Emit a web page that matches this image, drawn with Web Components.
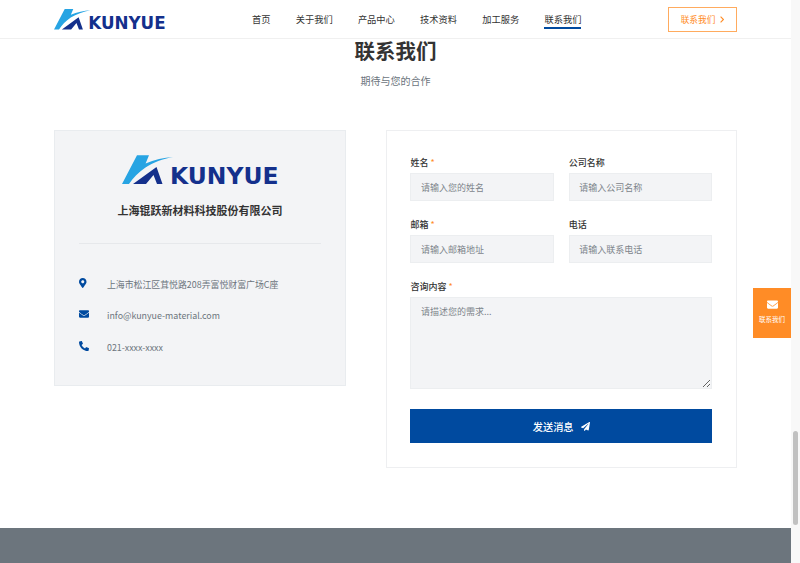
<!DOCTYPE html>
<html lang="zh-CN">
<head>
<meta charset="utf-8">
<title>联系我们</title>
<style>
html, body { margin: 0; height: 100%; overflow: hidden; background: #fff; }
body { display: flex; font-family: "Noto Sans CJK SC", "Noto Sans", sans-serif; color: #333; }
</style>
</head>
<body>
<page-body>
  <site-header></site-header>
  <contact-title heading="联系我们" sub="期待与您的合作"></contact-title>
  <contact-grid>
    <info-card slot="left"></info-card>
    <contact-form slot="right"></contact-form>
  </contact-grid>
  <site-footer></site-footer>
  <float-contact></float-contact>
</page-body>
<page-scrollbar></page-scrollbar>

<script>
// icon paths, shared by the components
const ICONS = {
    marker: [384, 'M172.268 501.67C26.97 291.031 0 268.413 0 192 0 85.961 85.961 0 192 0s192 85.961 192 192c0 76.413-26.97 99.031-172.268 309.67-9.535 13.774-29.93 13.773-39.464 0zM192 272c44.183 0 80-35.817 80-80s-35.817-80-80-80-80 35.817-80 80 35.817 80 80 80z'],
    envelope: [512, 'M502.3 190.8c3.9-3.1 9.7-.2 9.7 4.7V400c0 26.5-21.5 48-48 48H48c-26.5 0-48-21.5-48-48V195.6c0-5 5.7-7.8 9.7-4.7 22.4 17.4 52.1 39.5 154.1 113.6 21.1 15.4 56.7 47.8 92.2 47.6 35.7.3 72-32.8 92.3-47.6 102-74.1 131.6-96.3 154-113.7zM256 320c23.2.4 56.6-29.2 73.4-41.4 132.7-96.3 142.8-104.7 173.4-128.7 5.8-4.5 9.2-11.5 9.2-18.9v-19c0-26.5-21.5-48-48-48H48C21.5 64 0 85.5 0 112v19c0 7.4 3.4 14.3 9.2 18.9 30.6 23.9 40.7 32.4 173.4 128.7 16.8 12.2 50.2 41.8 73.4 41.4z'],
    phone: [512, 'M497.39 361.8l-112-48a24 24 0 0 0-28 6.9l-49.6 60.6A370.66 370.66 0 0 1 130.6 204.11l60.6-49.6a23.94 23.94 0 0 0 6.9-28l-48-112A24.16 24.16 0 0 0 122.6.61l-104 24A24 24 0 0 0 0 48c0 256.5 207.9 464 464 464a24 24 0 0 0 23.4-18.6l24-104a24.29 24.29 0 0 0-14.01-27.6z'],
    plane: [512, 'M476 3.2L12.5 270.6c-18.1 10.4-15.8 35.6 2.2 43.2L121 358.4l287.3-253.2c5.5-4.9 13.3 2.6 8.6 8.3L176 407v80.5c0 23.6 28.5 32.9 42.5 15.8L282 426l124.6 52.2c14.2 6 30.4-2.9 33-18.2l72-432C515 7.8 493.3-6.8 476 3.2z']
};
function icon(name, size, color) {
    const [w, d] = ICONS[name];
    return `<svg width="${size * w / 512}" height="${size}" viewBox="0 0 ${w} 512" fill="${color}" style="display:block"><path d="${d}"/></svg>`;
}

// the logo: swoosh mark plus a real text wordmark. viewBox has room under the baseline for the text box
const template_logo = document.createElement("template");
template_logo.innerHTML = `
    <style>
        :host { display: block; line-height: 0; }
        svg { display: block; width: 100%; height: auto; }
        text { font-family: "DejaVu Sans", sans-serif; font-weight: 700; font-size: 23.5px; fill: #14308c; }
    </style>
    <svg viewBox="0 0 157 36">
        <path fill="#27a4e3" d="M15 1.3H27L23.6 9.4C32 6 42 3.4 51 3C41 4.8 31 8.6 23.5 13.4C16.5 18 11 24 7 30H0Z"/>
        <path fill="#14308c" d="M11 30L34.5 13L40.5 30H35L31.5 21L24 30H11Z"/>
        <text x="48" y="30" textLength="108.5" lengthAdjust="spacingAndGlyphs">KUNYUE</text>
    </svg>
`;
class KyLogo extends HTMLElement {
    constructor() {
        super();
        this.attachShadow({ mode: "open" }).appendChild(template_logo.content.cloneNode(true));
    }
}
customElements.define("ky-logo", KyLogo);

const template_page = document.createElement("template");
template_page.innerHTML = `
    <style>
        :host { display: flex; flex-direction: column; position: relative; flex: 1 1 auto; min-width: 0; height: 563px; overflow: hidden; background: #fff; }
    </style>
    <slot></slot>
`;
class PageBody extends HTMLElement {
    constructor() {
        super();
        this.attachShadow({ mode: "open" }).appendChild(template_page.content.cloneNode(true));
    }
}
customElements.define("page-body", PageBody);

const template_header = document.createElement("template");
template_header.innerHTML = `
    <style>
        :host { display: flex; flex: none; align-items: center; height: 38px; padding: 0 54px; background: #fff; border-bottom: 1px solid #f0f0f0; }
        ky-logo { width: 112px; margin: 4px 86px 0 0; }
        nav { display: flex; gap: 25.2px; flex: 1; }
        a { display: block; font-size: 9.25px; line-height: 20px; color: #333; text-decoration: none; }
        a.active { box-shadow: 0 2px 0 0 #004a9f; height: 18px; }
        .cta { display: flex; align-items: center; justify-content: center; gap: 5px; box-sizing: border-box; width: 69px; height: 25px; border: 1px solid #ffab5e; color: #ff8c26; font-size: 8.7px; }
        .cta svg { width: 4px; height: 7px; }
    </style>
    <ky-logo></ky-logo>
    <nav>
        <a>首页</a><a>关于我们</a><a>产品中心</a><a>技术资料</a><a>加工服务</a><a class="active">联系我们</a>
    </nav>
    <div class="cta">联系我们
        <svg viewBox="0 0 4 7" fill="none" stroke="#ff8c26" stroke-width="1.1"><path d="M.6.6 3.4 3.5 .6 6.4"/></svg>
    </div>
`;
class SiteHeader extends HTMLElement {
    constructor() {
        super();
        this.attachShadow({ mode: "open" }).appendChild(template_header.content.cloneNode(true));
    }
}
customElements.define("site-header", SiteHeader);

const template_title = document.createElement("template");
template_title.innerHTML = `
    <style>
        :host { display: block; flex: none; text-align: center; }
        h1 { margin: 0; font-size: 20.5px; line-height: 22px; font-weight: 700; color: #333; }
        p { margin: 13px 0 0; font-size: 10px; line-height: 14px; color: #6c757d; }
    </style>
    <h1></h1>
    <p></p>
`;
class ContactTitle extends HTMLElement {
    constructor() {
        super();
        this.attachShadow({ mode: "open" }).appendChild(template_title.content.cloneNode(true));
    }
    connectedCallback() {
        this.shadowRoot.querySelector("h1").innerText = this.getAttribute("heading");
        this.shadowRoot.querySelector("p").innerText = this.getAttribute("sub");
    }
}
customElements.define("contact-title", ContactTitle);

const template_grid = document.createElement("template");
template_grid.innerHTML = `
    <style>
        :host { display: grid; flex: none; grid-template-columns: 292px 351px; gap: 40px; align-items: start; padding: 41.6px 54px 60px; }
    </style>
    <slot name="left"></slot>
    <slot name="right"></slot>
`;
class ContactGrid extends HTMLElement {
    constructor() {
        super();
        this.attachShadow({ mode: "open" }).appendChild(template_grid.content.cloneNode(true));
    }
}
customElements.define("contact-grid", ContactGrid);

const template_info = document.createElement("template");
template_info.innerHTML = `
    <style>
        :host { display: block; box-sizing: border-box; height: 256px; padding: 23.5px 24px 0; background: #f3f4f6; border: 1px solid #e9ecef; }
        ky-logo { width: 157px; margin: 0 auto; }
        h2 { margin: 9.8px 0 0; font-size: 11px; line-height: 20px; font-weight: 700; text-align: center; color: #333; }
        hr { margin: 23px 0 0; border: 0; border-top: 1px solid #e6e8eb; }
        ul { list-style: none; margin: 34px 0 0; padding: 0; display: flex; flex-direction: column; gap: 17.5px; }
        li { display: flex; align-items: flex-start; font-size: 8.9px; line-height: 14px; color: #6c757d; }
        .ic { width: 28px; flex: none; padding-top: 0; }
    </style>
    <ky-logo></ky-logo>
    <h2>上海锟跃新材料科技股份有限公司</h2>
    <hr>
    <ul>
        <li><span class="ic">${icon("marker", 10, "#004a9f")}</span>上海市松江区茸悦路208弄富悦财富广场C座</li>
        <li><span class="ic">${icon("envelope", 10, "#004a9f")}</span>info@kunyue-material.com</li>
        <li><span class="ic">${icon("phone", 10, "#004a9f")}</span>021-xxxx-xxxx</li>
    </ul>
`;
class InfoCard extends HTMLElement {
    constructor() {
        super();
        this.attachShadow({ mode: "open" }).appendChild(template_info.content.cloneNode(true));
    }
}
customElements.define("info-card", InfoCard);

const template_field = document.createElement("template");
template_field.innerHTML = `
    <style>
        :host { display: block; }
        label { display: block; box-sizing: border-box; height: 18.6px; padding-top: 1px; font-size: 9px; line-height: 13px; font-weight: 500; color: #333; }
        label b { color: #ff8c26; font-weight: 400; margin-left: 2px; }
        input, textarea { display: block; box-sizing: border-box; width: 100%; margin: 0; padding: 0 9.5px; border: 1px solid #eceef0; border-radius: 0; background: #f3f4f6; font-family: inherit; font-size: 9px; color: #333; outline: none; }
        input { height: 28px; }
        textarea { height: 92px; padding-top: 7px; line-height: 14px; resize: vertical; }
        ::placeholder { color: #7d848b; opacity: 1; }
    </style>
    <label></label>
`;
class FormField extends HTMLElement {
    constructor() {
        super();
        this.attachShadow({ mode: "open" }).appendChild(template_field.content.cloneNode(true));
    }
    connectedCallback() {
        const label = this.shadowRoot.querySelector("label");
        label.textContent = this.getAttribute("label");
        if (this.hasAttribute("required")) {
            label.insertAdjacentHTML("beforeend", "<b>*</b>");
        }
        const box = document.createElement(this.hasAttribute("multi") ? "textarea" : "input");
        box.placeholder = this.getAttribute("hint");
        this.shadowRoot.appendChild(box);
    }
}
customElements.define("form-field", FormField);

const template_form = document.createElement("template");
template_form.innerHTML = `
    <style>
        :host { display: block; box-sizing: border-box; height: 338.4px; padding: 24px 24px 0 23.4px; background: #fff; border: 1px solid #eeeff1; }
        .rows { display: grid; grid-template-columns: 1fr 1fr; gap: 15.4px 15px; }
        .wide { grid-column: 1 / 3; }
        button { display: flex; align-items: center; justify-content: center; gap: 7px; width: 100%; height: 34px; margin-top: 20px; padding: 0; border: 0; background: #004a9f; color: #fff; font-family: inherit; font-size: 10.2px; font-weight: 500; }
    </style>
    <div class="rows">
        <form-field label="姓名" required hint="请输入您的姓名"></form-field>
        <form-field label="公司名称" hint="请输入公司名称"></form-field>
        <form-field label="邮箱" required hint="请输入邮箱地址"></form-field>
        <form-field label="电话" hint="请输入联系电话"></form-field>
        <form-field class="wide" label="咨询内容" required multi hint="请描述您的需求..."></form-field>
    </div>
    <button>发送消息 ${icon("plane", 9, "#fff")}</button>
`;
class ContactForm extends HTMLElement {
    constructor() {
        super();
        this.attachShadow({ mode: "open" }).appendChild(template_form.content.cloneNode(true));
    }
}
customElements.define("contact-form", ContactForm);

const template_footer = document.createElement("template");
template_footer.innerHTML = `
    <style>
        :host { display: block; flex: none; height: 200px; background: #6c757d; }
    </style>
`;
class SiteFooter extends HTMLElement {
    constructor() {
        super();
        this.attachShadow({ mode: "open" }).appendChild(template_footer.content.cloneNode(true));
    }
}
customElements.define("site-footer", SiteFooter);

// floats over the page at the right edge
const template_float = document.createElement("template");
template_float.innerHTML = `
    <style>
        :host { position: absolute; right: 0; top: 288px; display: flex; flex-direction: column; align-items: center; box-sizing: border-box; width: 38px; height: 50px; padding-top: 11px; background: #ff8c26; color: #fff; font-size: 6.5px; line-height: 10px; }
        svg { margin-bottom: 4px; }
    </style>
    ${icon("envelope", 11, "#fff")}
    <span>联系我们</span>
`;
class FloatContact extends HTMLElement {
    constructor() {
        super();
        this.attachShadow({ mode: "open" }).appendChild(template_float.content.cloneNode(true));
    }
}
customElements.define("float-contact", FloatContact);

const template_bar = document.createElement("template");
template_bar.innerHTML = `
    <style>
        :host { display: block; flex: none; box-sizing: border-box; width: 9px; height: 563px; padding: 431px 2px 0; background: #f8f8f8; }
        div { height: 94px; border-radius: 3px; background: #c1c1c1; }
    </style>
    <div></div>
`;
class PageScrollbar extends HTMLElement {
    constructor() {
        super();
        this.attachShadow({ mode: "open" }).appendChild(template_bar.content.cloneNode(true));
    }
}
customElements.define("page-scrollbar", PageScrollbar);
</script>
</body>
</html>
